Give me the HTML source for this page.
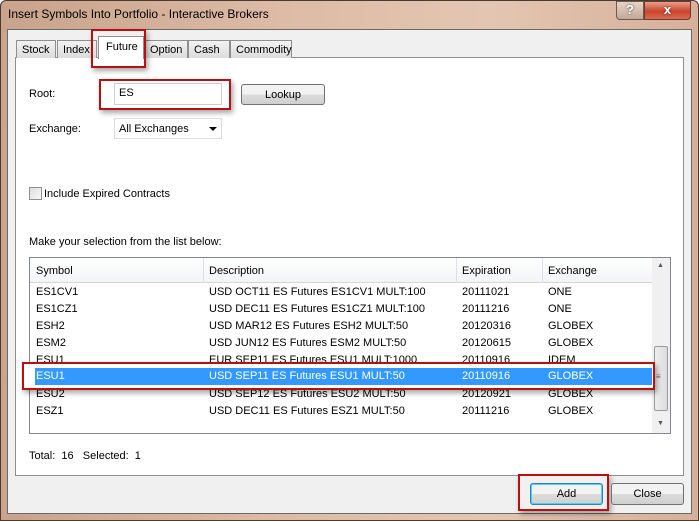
<!DOCTYPE html><html><head><style>
*{margin:0;padding:0;box-sizing:border-box}
body{width:699px;height:521px;overflow:hidden;background:#fff;font-family:"Liberation Sans",sans-serif;font-size:11px;color:#000;position:relative}
.a{position:absolute}
.t{position:absolute;white-space:nowrap}
.rb{position:absolute;border:2px solid #b80f13;box-shadow:2px 3px 5px rgba(0,0,0,.35)}
.tab{position:absolute;top:40px;height:18px;border:1px solid #8e8f8f;border-bottom:none;background:linear-gradient(#f2f2f2,#dcdcdc);padding:3px 0 0 5px;font-size:11px}
.row{position:absolute;left:36px;height:17px;width:616px}
.row span{position:absolute;top:2px}
.btn{position:absolute;border:1px solid #707070;border-radius:3px;background:linear-gradient(#f2f2f2 50%,#dddddd 50%,#cfcfcf);text-align:center;font-size:11px;padding-top:4px}
</style></head><body>
<div class="a" style="left:0;top:0;width:699px;height:521px;background:linear-gradient(90deg,#c9a38b,#ddbba6 40%,#e3c6b2 70%,#d6b09a);border:1px solid #4a3a30;border-radius:6px 6px 0 0"></div>
<div class="t" style="left:8px;top:7px;font-size:12px">Insert Symbols Into Portfolio - Interactive Brokers</div>
<div class="a" style="left:616px;top:1px;width:28px;height:19px;border:1px solid #6b5a50;border-radius:0 0 0 4px;background:linear-gradient(#e8d3c6,#c3a898);color:#fff;font-weight:bold;text-align:center;font-size:13px;text-shadow:0 0 2px #333">?</div>
<div class="a" style="left:644px;top:1px;width:47px;height:19px;border:1px solid #6b3a30;border-radius:0 0 4px 0;background:linear-gradient(#e8a08a,#c8452e 55%,#d86b50);color:#fff;font-weight:bold;text-align:center;font-size:13px;text-shadow:0 0 2px #333">x</div>
<div class="a" style="left:7px;top:29px;width:685px;height:485px;background:#f0f0f0;border:1px solid #6a6a6a"></div>
<div class="a" style="left:15px;top:57px;width:669px;height:419px;background:#fff;border:1px solid #8e8f8f"></div>
<div class="tab" style="left:16px;width:40px">Stock</div>
<div class="tab" style="left:57px;width:40px">Index</div>
<div class="tab" style="left:144px;width:44px">Option</div>
<div class="tab" style="left:188px;width:42px">Cash</div>
<div class="tab" style="left:230px;width:62px">Commodity</div>
<div class="a" style="left:98px;top:36px;width:46px;height:23px;background:#fff;border:1px solid #8e8f8f;border-bottom:none;padding:4px 0 0 7px">Future</div>
<div class="rb" style="left:91px;top:29px;width:55px;height:39px"></div>
<div class="t" style="left:29px;top:88px">Root:</div>
<div class="a" style="left:114px;top:83px;width:108px;height:22px;border:1px solid #c8cfd6;padding:3px 0 0 4px">ES</div>
<div class="rb" style="left:99px;top:79px;width:132px;height:31px"></div>
<div class="btn" style="left:241px;top:84px;width:84px;height:21px">Lookup</div>
<div class="t" style="left:29px;top:123px">Exchange:</div>
<div class="a" style="left:114px;top:118px;width:108px;height:21px;border:1px solid #dcdcdc;padding:4px 0 0 4px">All Exchanges<span style="position:absolute;right:4px;top:8px;border:4px solid transparent;border-top:4px solid #000;border-bottom:none"></span></div>
<div class="a" style="left:29px;top:187px;width:13px;height:13px;border:1px solid #8e8f8f;background:linear-gradient(135deg,#dcdcdc,#fafafa)"></div>
<div class="t" style="left:44px;top:188px">Include Expired Contracts</div>
<div class="t" style="left:29px;top:236px">Make your selection from the list below:</div>
<div class="a" style="left:29px;top:257px;width:642px;height:177px;border:1px solid #828790;background:#fff"></div>
<div class="a" style="left:30px;top:258px;width:622px;height:25px;background:linear-gradient(#fff,#f3f4f6);border-bottom:1px solid #d5d5d5"></div>
<div class="a" style="left:203px;top:258px;width:1px;height:25px;background:#dde"></div>
<div class="a" style="left:456px;top:258px;width:1px;height:25px;background:#dde"></div>
<div class="a" style="left:542px;top:258px;width:1px;height:25px;background:#dde"></div>
<div class="t" style="left:36px;top:265px">Symbol</div>
<div class="t" style="left:209px;top:265px">Description</div>
<div class="t" style="left:462px;top:265px">Expiration</div>
<div class="t" style="left:548px;top:265px">Exchange</div>
<div class="a" style="left:652px;top:258px;width:18px;height:175px;background:#f0f0f0"></div>
<div class="a" style="left:654px;top:346px;width:14px;height:65px;border:1px solid #9a9a9a;border-radius:2px;background:linear-gradient(90deg,#eee,#dcdcdc)"></div>
<div class="t" style="left:657px;top:262px;font-size:7px;color:#555">▲</div>
<div class="t" style="left:657px;top:420px;font-size:7px;color:#555">▼</div>
<div class="t" style="left:656px;top:372px;font-size:8px;color:#666">≡</div>
<div class="row" style="top:284px"><span style="left:0">ES1CV1</span><span style="left:173px">USD OCT11 ES Futures ES1CV1 MULT:100</span><span style="left:426px">20111021</span><span style="left:512px">ONE</span></div>
<div class="row" style="top:301px"><span style="left:0">ES1CZ1</span><span style="left:173px">USD DEC11 ES Futures ES1CZ1 MULT:100</span><span style="left:426px">20111216</span><span style="left:512px">ONE</span></div>
<div class="row" style="top:318px"><span style="left:0">ESH2</span><span style="left:173px">USD MAR12 ES Futures ESH2 MULT:50</span><span style="left:426px">20120316</span><span style="left:512px">GLOBEX</span></div>
<div class="row" style="top:335px"><span style="left:0">ESM2</span><span style="left:173px">USD JUN12 ES Futures ESM2 MULT:50</span><span style="left:426px">20120615</span><span style="left:512px">GLOBEX</span></div>
<div class="row" style="top:352px"><span style="left:0">ESU1</span><span style="left:173px">EUR SEP11 ES Futures ESU1 MULT:1000</span><span style="left:426px">20110916</span><span style="left:512px">IDEM</span></div>
<div class="row" style="top:386px"><span style="left:0">ESU2</span><span style="left:173px">USD SEP12 ES Futures ESU2 MULT:50</span><span style="left:426px">20120921</span><span style="left:512px">GLOBEX</span></div>
<div class="row" style="top:403px"><span style="left:0">ESZ1</span><span style="left:173px">USD DEC11 ES Futures ESZ1 MULT:50</span><span style="left:426px">20111216</span><span style="left:512px">GLOBEX</span></div>
<div class="rb" style="left:22px;top:362px;width:633px;height:28px;background:#fff"></div>
<div class="row" style="top:368px;left:35px;width:617px;background:#3399ff;color:#fff"><span style="left:1px">ESU1</span><span style="left:174px">USD SEP11 ES Futures ESU1 MULT:50</span><span style="left:427px">20110916</span><span style="left:513px">GLOBEX</span></div>
<div class="t" style="left:29px;top:450px">Total:&nbsp; 16&nbsp;&nbsp; Selected:&nbsp; 1</div>
<div class="rb" style="left:518px;top:474px;width:91px;height:37px"></div>
<div class="btn" style="left:530px;top:483px;width:73px;height:22px;border-color:#3c7fb1;box-shadow:inset 0 0 0 1px #48d2fb">Add</div>
<div class="btn" style="left:611px;top:483px;width:73px;height:22px">Close</div>
</body></html>
